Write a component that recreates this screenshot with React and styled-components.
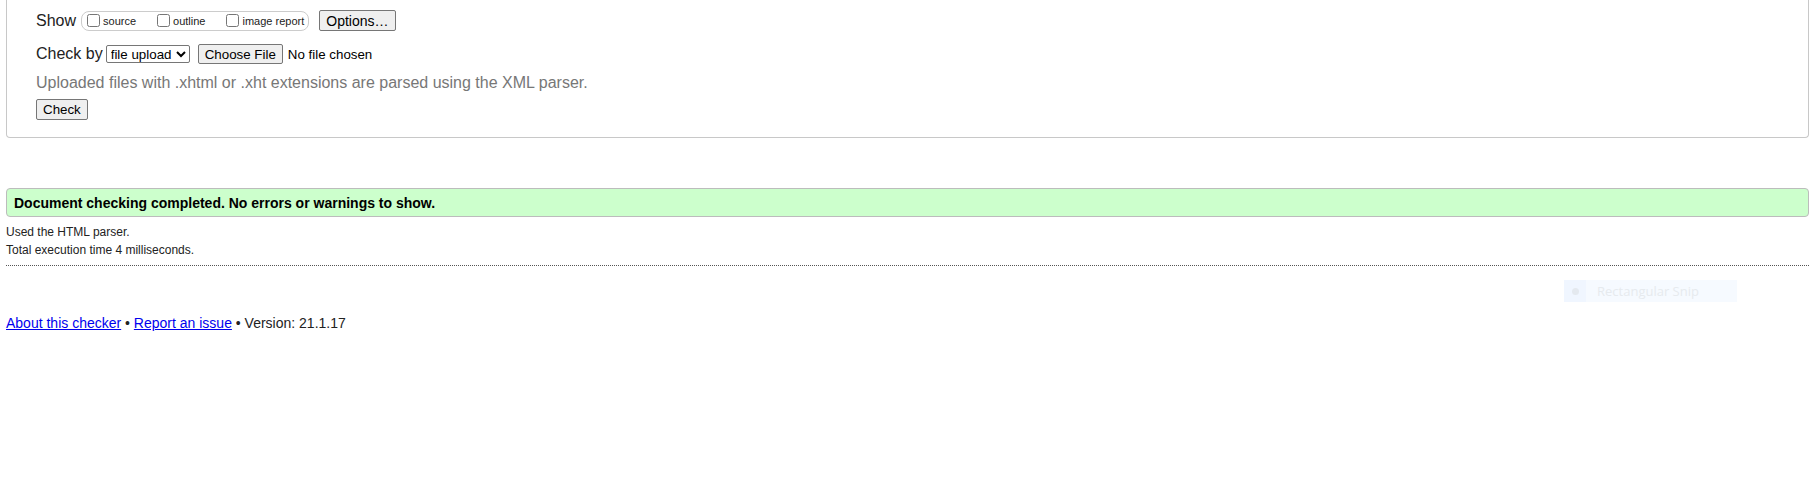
import React from 'react';
import styled, { createGlobalStyle } from 'styled-components';

const GlobalStyle = createGlobalStyle`
  html, body {
    margin: 0;
    padding: 0;
    background: #fff;
  }
  body {
    font-family: "Liberation Sans", Arial, sans-serif;
    color: #222;
  }
`;

const Page = styled.div`
  position: relative;
  padding: 0 7px 0 6px;
  min-height: 477px;
  box-sizing: border-box;
`;

const Panel = styled.div`
  border: 1px solid #c8c8c8;
  border-top: none;
  border-radius: 0 0 4px 4px;
  padding: 8px 0 17px 29px;
`;

const Row = styled.div`
  display: flex;
  align-items: center;
  height: ${p => p.h}px;
  margin-top: ${p => p.mt || 0}px;
  font-size: 16px;
  color: #222;
`;

const Label = styled.span`
  margin-right: ${p => p.gap || 0}px;
`;

const OptionGroup = styled.span`
  display: inline-flex;
  align-items: center;
  height: 18px;
  border: 1px solid #ccc;
  border-radius: 8px;
  padding: 0 4px 0 1px;
  margin-right: 10px;
`;

const OptionItem = styled.label`
  display: inline-flex;
  align-items: center;
  font-size: 11px;
  color: #222;
  margin-right: ${p => (p.last ? 0 : 17)}px;

  input {
    width: 13px;
    height: 13px;
    margin: 0 3px 0 4px;
  }
`;

const Button = styled.button`
  font-family: "Liberation Sans", Arial, sans-serif;
  font-size: ${p => p.fs || 13.333}px;
  color: #000;
  height: ${p => p.h || 21}px;
  padding: 0 ${p => p.px || 6}px;
  background: #efefef;
  border: 1px solid #767676;
  border-radius: 2px;
  margin-right: ${p => p.mr || 0}px;
`;

const Select = styled.select`
  font-family: "Liberation Sans", Arial, sans-serif;
  font-size: 13.333px;
  color: #000;
  width: 84px;
  height: 18px;
  padding: 0;
  border: 1px solid #767676;
  border-radius: 2px;
  background: #fff;
  margin: 0 8px 0 3px;
`;

const Chosen = styled.span`
  font-size: 13.333px;
  color: #000;
  margin-left: 5px;
`;

const Hint = styled.div`
  margin-top: 8px;
  font-size: 16px;
  line-height: 18px;
  color: #777;
`;

const Success = styled.div`
  margin-top: 50px;
  height: 27px;
  line-height: 28px;
  padding-left: 7px;
  background: #ccffcc;
  border: 1px solid #bcbcbc;
  border-radius: 4px;
  font-size: 14px;
  font-weight: bold;
  color: #000;
`;

const Details = styled.div`
  margin-top: 6px;
  font-size: 12px;
  line-height: 18px;
  color: #222;
`;

const Rule = styled.hr`
  margin: 6px 0 0;
  border: none;
  border-top: 1px dotted #555;
  height: 0;
`;

const Footer = styled.div`
  margin-top: 49px;
  font-size: 14px;
  line-height: 16px;
  color: #222;

  a {
    color: #0000ee;
    text-decoration: underline;
  }
`;

const SnipGhost = styled.div`
  position: absolute;
  left: 1564px;
  top: 280px;
  width: 173px;
  height: 22px;
  display: flex;
  align-items: center;
  background: #f6faff;
  font-family: "Open Sans", "Liberation Sans", sans-serif;
  font-size: 13px;
  color: #e6eaee;
`;

const SnipIcon = styled.span`
  width: 22px;
  height: 22px;
  display: flex;
  align-items: center;
  justify-content: center;
  background: #f0f6ff;
  margin-right: 11px;

  &::before {
    content: '';
    width: 7px;
    height: 7px;
    border-radius: 50%;
    background: #e4e9ef;
  }
`;

export default function App() {
  return (
    <Page>
      <GlobalStyle />
      <Panel>
        <Row h={25}>
          <Label gap={5}>Show</Label>
          <OptionGroup>
            <OptionItem><input type="checkbox" />source</OptionItem>
            <OptionItem><input type="checkbox" />outline</OptionItem>
            <OptionItem last><input type="checkbox" />image report</OptionItem>
          </OptionGroup>
          <Button fs={14} px={6}>Options…</Button>
        </Row>
        <Row h={24} mt={9}>
          <Label>Check by</Label>
          <Select defaultValue="file">
            <option value="file">file upload</option>
          </Select>
          <Button h={20}>Choose File</Button>
          <Chosen>No file chosen</Chosen>
        </Row>
        <Hint>Uploaded files with .xhtml or .xht extensions are parsed using the XML parser.</Hint>
        <Row h={21} mt={7}>
          <Button>Check</Button>
        </Row>
      </Panel>

      <Success>Document checking completed. No errors or warnings to show.</Success>

      <Details>
        <div>Used the HTML parser.</div>
        <div>Total execution time 4 milliseconds.</div>
      </Details>

      <Rule />

      <Footer>
        <a href="#about">About this checker</a> • <a href="#issue">Report an issue</a> • Version: 21.1.17
      </Footer>

      <SnipGhost>
        <SnipIcon />
        Rectangular Snip
      </SnipGhost>
    </Page>
  );
}
